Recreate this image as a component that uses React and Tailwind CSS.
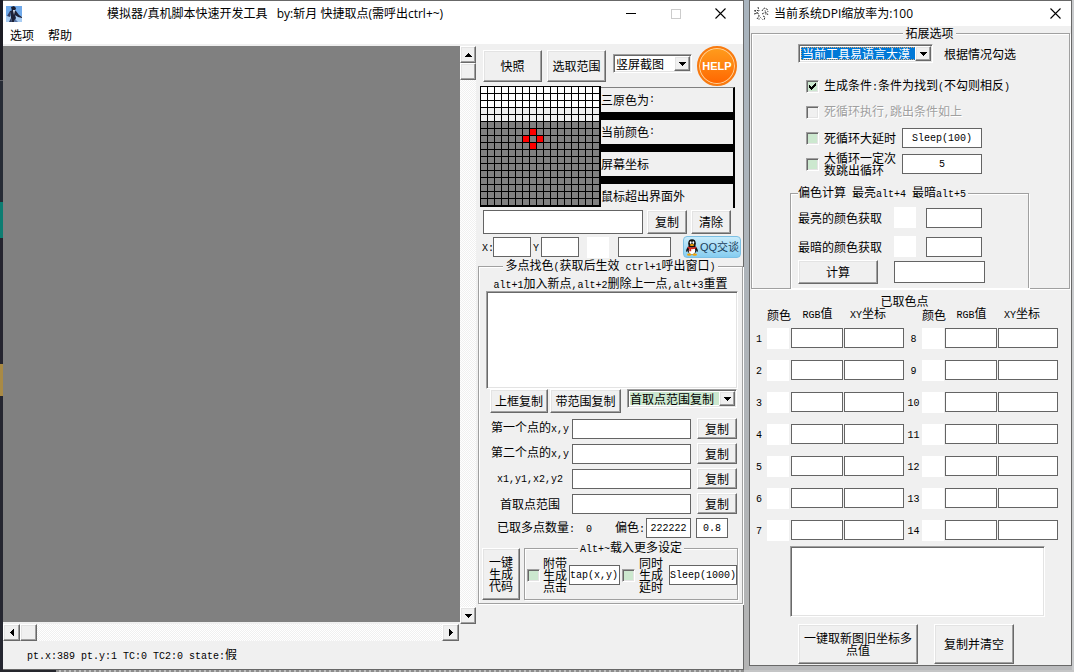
import { clsx } from 'clsx';

const raised =
  'border border-t-white border-l-white border-r-[#696969] border-b-[#696969] shadow-[inset_-1px_-1px_0_#a0a0a0,inset_1px_1px_0_#e3e3e3] bg-[#f0f0f0]';
const sunken =
  'border border-t-[#a0a0a0] border-l-[#a0a0a0] border-r-white border-b-white shadow-[inset_1px_1px_0_#696969,inset_-1px_-1px_0_#e3e3e3]';
const etched = 'min-w-0 border border-[#a0a0a0] shadow-[1px_1px_0_#fff,inset_1px_1px_0_#fff]';
const track = 'bg-[repeating-conic-gradient(#ffffff_0_25%,#f0f0f0_0_50%)] bg-size-[2px_2px]';

const pointRows = [
  { id: 'first', label: '第一个点的x,y' },
  { id: 'second', label: '第二个点的x,y' },
  { id: 'rect', label: 'x1,y1,x2,y2' },
  { id: 'range', label: '首取点范围' },
];

const infoRows = ['三原色为:', '当前颜色:', '屏幕坐标', '鼠标超出界面外'];

const colorRows = [1, 2, 3, 4, 5, 6, 7];

const targetCells = [
  [7, 6],
  [6, 7],
  [8, 7],
  [7, 8],
];

// Latin runs are set in a half-width mono face, CJK keeps the full 12px cell
function Txt({ children }) {
  return children.split(/([\x20-\x7e]+)/).map((part, i) =>
    i % 2 ? (
      <span key={i} className="font-['Liberation_Mono',monospace] text-[10px] whitespace-pre">
        {part}
      </span>
    ) : (
      part
    )
  );
}

function Button({ className, children }) {
  return (
    <button type="button" className={clsx(raised, 'shrink-0 text-center leading-3', className)}>
      {children}
    </button>
  );
}

function Field({ className, ...props }) {
  return (
    <input
      type="text"
      className={clsx(
        "shrink-0 border border-[#646464] bg-white font-['Liberation_Mono',monospace] text-[10px] outline-none",
        className
      )}
      {...props}
    />
  );
}

function Check({ id, disabled, checked, className }) {
  return (
    <span className={clsx('relative size-[13px] shrink-0', className)}>
      <input
        id={id}
        type="checkbox"
        defaultChecked={checked}
        disabled={disabled}
        className={clsx(
          sunken,
          'peer block size-[13px] appearance-none',
          disabled ? 'bg-[#f0f0f0]' : 'bg-[#cce8cf]'
        )}
      />
      <svg
        viewBox="0 0 13 13"
        shapeRendering="crispEdges"
        className="pointer-events-none absolute inset-0 hidden size-[13px] peer-checked:block"
      >
        <path d="M3 5v3h1v1h1v1h1v-1h1v-1h1v-1h1v-1h1V3h-1v1h-1v1h-1v1h-1v1h-1v-1h-1v-1z" />
      </svg>
    </span>
  );
}

function Arrow({ dir }) {
  const paths = {
    up: 'M4 0h1v1h1v1h1v1h1v1H1V3h1V2h1V1h1z',
    down: 'M1 0h7v1H7v1H6v1H5v1H4V3H3V2H2V1H1z',
    left: 'M4 0v7H3V6H2V5H1V4H0V3h1V2h1V1h1V0z',
    right: 'M0 0v7h1V6h1V5h1V4h1V3H3V2H2V1H1V0z',
  };
  const flat = dir === 'up' || dir === 'down';
  return (
    <svg
      viewBox={flat ? '0 0 9 4' : '0 0 4 7'}
      shapeRendering="crispEdges"
      className={flat ? 'h-1 w-[9px]' : 'h-[7px] w-1'}
    >
      <path d={paths[dir]} />
    </svg>
  );
}

function Combo({ label, value, className, selectClass }) {
  return (
    <span className={clsx(sunken, 'relative block h-[19px] shrink-0 bg-white p-0.5', className)}>
      <select
        aria-label={label}
        className={clsx('block h-full w-full appearance-none text-xs leading-3 outline-none', selectClass)}
      >
        <option>{value}</option>
      </select>
      <span
        className={clsx(
          raised,
          'pointer-events-none absolute inset-y-px right-px flex w-4 items-center justify-center'
        )}
      >
        <Arrow dir="down" />
      </span>
    </span>
  );
}

function ScrollButton({ dir, className }) {
  return (
    <button
      type="button"
      aria-label={dir}
      className={clsx(raised, 'flex shrink-0 items-center justify-center', className)}
    >
      <Arrow dir={dir} />
    </button>
  );
}

function CloseIcon() {
  return (
    <svg viewBox="0 0 11 11" className="size-[11px]" stroke="#000" strokeWidth="1.1">
      <path d="M0.5 0.5l10 10M10.5 0.5l-10 10" />
    </svg>
  );
}

function PixelGrid() {
  const lines = Array.from({ length: 18 }, (_, i) => i * 7);
  return (
    <svg viewBox="0 0 121 121" shapeRendering="crispEdges" className="size-[121px] shrink-0">
      <rect width="121" height="21" fill="#fff" />
      <rect y="21" width="121" height="14" fill="#f0f0f0" />
      <rect y="35" width="121" height="86" fill="#808080" />
      {targetCells.map(([x, y]) => (
        <rect key={`${x}-${y}`} x={x * 7} y={y * 7} width="7" height="7" fill="#f00" />
      ))}
      {lines.map((p) => (
        <path key={p} d={`M${p} 0h1v121h-1zM0 ${p}h121v1H0z`} />
      ))}
      <path d="M120 0h1v121h-1zM0 120h121v1H0z" />
    </svg>
  );
}

function Penguin() {
  return (
    <svg viewBox="0 0 12 17" className="h-[17px] w-3 shrink-0">
      <path d="M2 8C0 10-0.5 13 1 13l1-2zM10 8c2 2 2.500 5 1 5l-1-2z" fill="#111" />
      <ellipse cx="6" cy="10.500" rx="4.500" ry="5" fill="#111" />
      <ellipse cx="6" cy="11.500" rx="3.200" ry="3.800" fill="#fff" />
      <ellipse cx="6" cy="4.500" rx="3.800" ry="4.300" fill="#111" />
      <ellipse cx="4.700" cy="3.600" rx="0.900" ry="1.300" fill="#fff" />
      <ellipse cx="7.300" cy="3.600" rx="0.900" ry="1.300" fill="#fff" />
      <ellipse cx="6" cy="6" rx="2.200" ry="0.900" fill="#f5a300" />
      <path d="M1.800 7.500q4.200 2 8.400 0v1.700q-3 1.200-5 .9v2.200H3.300V9.700l-1.500-.5z" fill="#d8261c" />
      <ellipse cx="3.300" cy="15.700" rx="2.300" ry="1.100" fill="#f5a300" />
      <ellipse cx="8.700" cy="15.700" rx="2.300" ry="1.100" fill="#f5a300" />
    </svg>
  );
}

function AppIcon() {
  return (
    <svg viewBox="0 0 16 16" className="size-4">
      <rect width="16" height="16" fill="#6fa9ea" />
      <path d="M0 10h16v6H0z" fill="#a9cdf3" />
      <path d="M5 1l3-1 2 2-1 3H6z" fill="#1a1c2e" />
      <path d="M4 5l3-1 3 1 3 4 3 2v1l-4-1-3-2 1 3-2 4H6l-1-4z" fill="#1d2238" />
      <path d="M7 4h2L8 9z" fill="#dde6f4" />
      <path d="M4 5l-3 5 3 1z" fill="#33406a" />
      <path d="M5 12l-2 4h3z" fill="#2b3a5f" />
      <path d="M9 13l3 3H8z" fill="#5b77a8" />
    </svg>
  );
}

function DialogIcon() {
  return (
    <svg viewBox="0 0 16 16" className="size-4" fill="none" stroke="#333" strokeDasharray="2 1">
      <path d="M1 5l3-1 2 2M1 8l4-1 1 3-2 3M5 1l1 4M9 5l2-3 3 1 1 3M9 8l4-2 2 3M10 10l2 1-1 3M4 6v3" />
      <path d="M2 5l3 3M12 4l1 5M7 11l3 3M6 9v5" stroke="#888" />
    </svg>
  );
}

function Desktop() {
  return (
    <div className="flex w-[3px] shrink-0 flex-col bg-[#252630]">
      <div className="h-20 bg-[#1c1c24]" />
      <div className="h-[122px] border-t border-[#5b5d64] bg-[#262b35]" />
      <div className="h-9 bg-[#0d7d72]" />
      <div className="h-[126px] bg-[#25242f]" />
      <div className="h-8 bg-[#a98a45]" />
    </div>
  );
}

function CapturePane() {
  return (
    <div className="flex min-w-0 flex-1 flex-col pt-0.5">
      <div className="flex flex-1">
        <div className="mb-0.5 min-w-0 flex-1 bg-[#808080]" />
        <div className={clsx('flex w-4 shrink-0 flex-col', track)}>
          <ScrollButton dir="up" className="h-[17px]" />
          <div className={clsx(raised, 'h-[17px]')} />
          <ScrollButton dir="down" className="mt-auto h-[17px]" />
        </div>
      </div>
      <div className={clsx('mr-[17px] flex h-[17px]', track)}>
        <ScrollButton dir="left" className="w-[17px]" />
        <div className={clsx(raised, 'w-[17px]')} />
        <ScrollButton dir="right" className="ml-auto w-[17px]" />
      </div>
      <p className="flex h-7 items-center pl-6">
        <span>
          <Txt>pt.x:389 pt.y:1 TC:0 TC2:0 state:假</Txt>
        </span>
      </p>
    </div>
  );
}

function MultiPoint() {
  return (
    <fieldset className={clsx(etched, 'mt-px ml-0.5 pb-[3px]')}>
      <legend className="mx-auto bg-[#f0f0f0] px-0.5 leading-3">
        <Txt>多点找色(获取后生效 ctrl+1呼出窗口)</Txt>
      </legend>
      <p className="mt-[3px] h-3 text-center leading-3 whitespace-nowrap">
        <Txt>alt+1加入新点,alt+2删除上一点,alt+3重置</Txt>
      </p>
      <div className="mt-0.5 pr-1 pl-[7px]">
        <textarea
          aria-label="多点找色结果"
          className={clsx(sunken, 'block h-[98px] w-full resize-none bg-white p-1 outline-none')}
        />
      </div>

      <div className="flex pl-[11px]">
        <Button className="h-6 w-[58px]">上框复制</Button>
        <Button className="ml-0.5 h-6 w-[71px]">带范围复制</Button>
        <Combo
          label="复制方式"
          value="首取点范围复制"
          className="ml-1.5 w-[110px]"
          selectClass="bg-[#cce8cf]"
        />
      </div>

      <div className="mt-[5px] flex flex-col gap-1 pl-[11px]">
        {pointRows.map((row) => (
          <div key={row.id} className="flex h-[21px] items-center">
            <label htmlFor={row.id} className="w-20 text-center whitespace-nowrap">
              <Txt>{row.label}</Txt>
            </label>
            <Field id={row.id} className="ml-0.5 h-5 w-[119px]" />
            <Button className="ml-1.5 h-[21px] w-10">复制</Button>
          </div>
        ))}
        <div className="flex h-5 items-center pl-[7px] whitespace-nowrap">
          <span className="w-[89px]">
            <Txt>已取多点数量:</Txt>
          </span>
          <span className="w-[29px]">
            <Txt>0</Txt>
          </span>
          <label htmlFor="offset" className="w-[31px]">
            <Txt>偏色:</Txt>
          </label>
          <Field id="offset" defaultValue="222222" className="h-5 w-[45px] text-center" />
          <Field
            aria-label="相似度"
            defaultValue="0.8"
            className="ml-[5px] h-5 w-8 text-center"
          />
        </div>
      </div>

      <div className="mt-[3px] flex items-end gap-1 pr-1 pl-[3px]">
        <Button className="h-[52px] w-[38px] px-1">一键生成代码</Button>
        <fieldset className={clsx(etched, 'h-[59px] flex-1')}>
          <legend className="mx-auto bg-[#f0f0f0] px-0.5 leading-3">
            <Txt>Alt+~载入更多设定</Txt>
          </legend>
          <div className="flex items-center pt-px pl-0.5">
            <Check id="with-tap" />
            <label htmlFor="with-tap" className="ml-[3px] w-6 leading-3">
              附带生成点击
            </label>
            <Field aria-label="点击代码" defaultValue="tap(x,y)" className="ml-0.5 h-5 w-[51px]" />
            <Check id="with-delay" className="ml-0.5" />
            <label htmlFor="with-delay" className="ml-1 w-6 leading-3">
              同时生成延时
            </label>
            <Field
              aria-label="延时代码"
              defaultValue="Sleep(1000)"
              className="ml-1.5 h-5 w-[68px]"
            />
          </div>
        </fieldset>
      </div>
    </fieldset>
  );
}

function ToolPane() {
  return (
    <div className="w-[267px] shrink-0 pt-0.5">
      <div className="flex h-10 items-center pl-[7px]">
        <Button className="h-8 w-[59px]">快照</Button>
        <Button className="ml-[5px] h-8 w-[59px]">选取范围</Button>
        <Combo label="截图方向" value="竖屏截图" className="mt-2 ml-[7px] w-[79px] self-start" />
        <button
          type="button"
          className="ml-[5px] size-10 shrink-0 rounded-full border-2 border-[#f87a10] bg-linear-to-b from-[#ff9c1c] to-[#ff6500] font-['Liberation_Sans',sans-serif] text-[11px] font-bold text-white shadow-[inset_0_0_0_1px_#ffd29a]"
        >
          HELP
        </button>
      </div>

      <div className="flex pl-1">
        <PixelGrid />
        <div className="mt-px flex w-[134px] flex-col gap-2 border-t border-r-2 border-t-[#808080] border-r-black bg-black">
          {infoRows.map((text) => (
            <p key={text} className="flex h-6 items-center bg-[#f0f0f0]">
              <Txt>{text}</Txt>
            </p>
          ))}
        </div>
      </div>

      <div className="mt-0.5 flex pl-[7px]">
        <Field aria-label="颜色结果" className="h-6 w-40" />
        <Button className="ml-1 h-6 w-10">复制</Button>
        <Button className="ml-1 h-6 w-10">清除</Button>
      </div>

      <div className="mt-0.5 flex h-[22px] items-center pl-1.5">
        <label htmlFor="pos-x" className="w-[11px] shrink-0 whitespace-nowrap">
          <Txt>X:</Txt>
        </label>
        <Field id="pos-x" className="h-5 w-[38px]" />
        <label htmlFor="pos-y" className="w-[10px] shrink-0 pl-0.5">
          <Txt>Y</Txt>
        </label>
        <Field id="pos-y" className="h-5 w-[38px]" />
        <div className="ml-2 h-[21px] w-[22px] shrink-0 bg-white" />
        <Field aria-label="当前颜色值" className="ml-[9px] h-5 w-[53px]" />
        <button
          type="button"
          className="ml-3 flex h-[22px] w-[58px] shrink-0 items-center gap-0.5 rounded-sm border border-[#7cc0e4] bg-linear-to-b from-[#c9ecfb] to-[#86cdf0] pl-0.5 text-[11px] leading-3 whitespace-nowrap text-[#1c3f5c]"
        >
          <Penguin />
          <span className="font-['Liberation_Sans','Noto_Sans_CJK_SC',sans-serif]">QQ交谈</span>
        </button>
      </div>

      <MultiPoint />
    </div>
  );
}

function MainWindow() {
  return (
    <section className="flex min-w-0 flex-1 flex-col border-t border-r border-b border-[#686868] bg-[#f0f0f0]">
      <header className="flex h-[25px] items-center bg-white pl-[3px] font-['Open_Sans','Noto_Sans_CJK_SC',sans-serif]">
        <AppIcon />
        <h1 className="ml-[85px] flex-1 whitespace-pre">
          模拟器/真机脚本快速开发工具   by:斩月 快捷取点(需呼出ctrl+~)
        </h1>
        <button type="button" aria-label="最小化" className="flex h-full w-[45px] items-center justify-center">
          <span className="h-px w-[10px] bg-black" />
        </button>
        <button type="button" aria-label="最大化" className="flex h-full w-[45px] items-center justify-center">
          <span className="size-[10px] border border-[#cccccc]" />
        </button>
        <button type="button" aria-label="关闭" className="flex h-full w-[45px] items-center justify-center">
          <CloseIcon />
        </button>
      </header>
      <nav className="flex h-[18px] items-center gap-3.5 bg-white pl-[7px]">
        <button type="button">选项</button>
        <button type="button">帮助</button>
      </nav>
      <div className="flex flex-1">
        <CapturePane />
        <ToolPane />
      </div>
    </section>
  );
}

function ColorCells({ n }) {
  return (
    <>
      <th scope="row" className="p-0 text-center font-normal">
        <Txt>{String(n)}</Txt>
      </th>
      <td className="p-0">
        <div className="h-[21px] w-[22px] bg-white" />
      </td>
      <td className="p-0">
        <Field aria-label={`RGB值 ${n}`} className="block h-5 w-[52px]" />
      </td>
      <td className="p-0">
        <Field aria-label={`XY坐标 ${n}`} className="block h-5 w-[60px]" />
      </td>
    </>
  );
}

function ColorTable() {
  const heads = (
    <>
      <td />
      <th className="p-0 text-left font-normal">颜色</th>
      <th className="p-0 text-center font-normal">
        <Txt>RGB值</Txt>
      </th>
      <th className="p-0 pl-1.5 text-left font-normal">
        <Txt>XY坐标</Txt>
      </th>
    </>
  );
  return (
    <table className="mt-1.5 w-[307px] table-fixed border-collapse whitespace-nowrap">
      <caption className="leading-3">已取色点</caption>
      <colgroup>
        <col className="w-4" />
        <col className="w-6" />
        <col className="w-[53px]" />
        <col className="w-[61px]" />
        <col className="w-[17px]" />
        <col className="w-[23px]" />
        <col className="w-[53px]" />
        <col className="w-[60px]" />
      </colgroup>
      <thead>
        <tr className="h-[15px] leading-3">
          {heads}
          {heads}
        </tr>
      </thead>
      <tbody>
        {colorRows.map((n) => (
          <tr key={n} className="h-8">
            <ColorCells n={n} />
            <ColorCells n={n + 7} />
          </tr>
        ))}
      </tbody>
    </table>
  );
}

function OptionsDialog() {
  return (
    <section className="flex w-[323px] shrink-0 flex-col self-start border border-[#686868] bg-[#f0f0f0]">
      <header className="flex h-[25px] items-center bg-white pl-[3px] font-['Open_Sans','Noto_Sans_CJK_SC',sans-serif]">
        <DialogIcon />
        <h2 className="ml-[5px] flex-1">当前系统DPI缩放率为:100</h2>
        <button type="button" aria-label="关闭" className="flex h-full w-8 items-center justify-center">
          <CloseIcon />
        </button>
      </header>

      <div className="px-px pt-px">
        <fieldset className={clsx(etched, 'pl-[38px]')}>
          <legend className="mx-auto bg-[#f0f0f0] px-0.5 leading-3">拓展选项</legend>
          <div className="mt-[5px] ml-2 flex items-center gap-[11px]">
            <Combo
              label="当前工具"
              value="当前工具易语言大漠"
              className="w-[135px]"
              selectClass="border border-dotted border-[#e0a060] bg-[#0078d7] text-white"
            />
            <span>根据情况勾选</span>
          </div>

          <div className="mt-[13px] ml-4 flex flex-col gap-1.5 whitespace-nowrap">
            <div className="flex h-5 items-center gap-[5px]">
              <Check id="cond" checked />
              <label htmlFor="cond">
                <Txt>生成条件:条件为找到(不勾则相反)</Txt>
              </label>
            </div>
            <div className="flex h-5 items-center gap-[5px]">
              <Check id="loop" disabled />
              <label htmlFor="loop" className="text-[#a0a0a0] text-shadow-[1px_1px_0_#ffffff]">
                <Txt>死循环执行,跳出条件如上</Txt>
              </label>
            </div>
            <div className="flex h-5 items-center gap-[5px]">
              <Check id="loop-delay" />
              <label htmlFor="loop-delay" className="w-[73px]">
                死循环大延时
              </label>
              <Field aria-label="延时" defaultValue="Sleep(100)" className="h-5 w-20 text-center" />
            </div>
            <div className="flex h-5 items-center gap-[5px]">
              <Check id="loop-count" />
              <label htmlFor="loop-count" className="w-[73px] leading-3 whitespace-normal">
                大循环一定次数跳出循环
              </label>
              <Field aria-label="次数" defaultValue="5" className="h-5 w-20 text-center" />
            </div>
          </div>

          <fieldset className={clsx(etched, 'mt-3 w-[239px] border-b-0 pb-1 pl-[7px]')}>
            <legend className="bg-[#f0f0f0] pr-0.5 leading-3">
              <Txt>偏色计算 最亮alt+4 最暗alt+5</Txt>
            </legend>
            <div className="mt-1.5 flex h-[21px] items-center">
              <label htmlFor="brightest" className="w-24">
                最亮的颜色获取
              </label>
              <div className="h-[21px] w-[22px] bg-white" />
              <Field id="brightest" className="ml-[10px] h-5 w-14" />
            </div>
            <div className="mt-2 flex h-[21px] items-center">
              <label htmlFor="darkest" className="w-24">
                最暗的颜色获取
              </label>
              <div className="h-[21px] w-[22px] bg-white" />
              <Field id="darkest" className="ml-[10px] h-5 w-14" />
            </div>
            <div className="mt-[3px] flex items-center">
              <Button className="h-6 w-20">计算</Button>
              <Field aria-label="偏色结果" className="ml-4 h-[22px] w-[91px]" />
            </div>
          </fieldset>
        </fieldset>

        <ColorTable />

        <textarea
          aria-label="坐标多点值"
          className={clsx(sunken, 'ml-[39px] block h-[71px] w-[255px] resize-none bg-white p-1 outline-none')}
        />
        <div className="mt-[7px] ml-[47px] flex gap-4 pb-px">
          <Button className="h-10 w-[120px] px-1">一键取新图旧坐标多点值</Button>
          <Button className="h-10 w-20">复制并清空</Button>
        </div>
      </div>
    </section>
  );
}

export default function App() {
  return (
    <div className="flex min-h-screen flex-col bg-[#b9babc] font-['Noto_Sans_CJK_SC',sans-serif] text-xs leading-4 text-black">
      <div className="flex flex-1">
        <Desktop />
        <MainWindow />
        <div className="w-[5px] shrink-0 bg-linear-to-b from-[#a9b4be] to-[#b4b4b4]" />
        <OptionsDialog />
        <div className="w-0.5 shrink-0 bg-[#c9cbcd]" />
      </div>
      <div className="flex h-0.5">
        <div className="w-14 bg-[#25262d]" />
        <div className="flex-1 bg-[repeating-linear-gradient(90deg,#8d8d8d_0_3px,#bdbdbd_3px_5px)]" />
        <div className="w-[330px] bg-[#c4c5c6]" />
      </div>
    </div>
  );
}
